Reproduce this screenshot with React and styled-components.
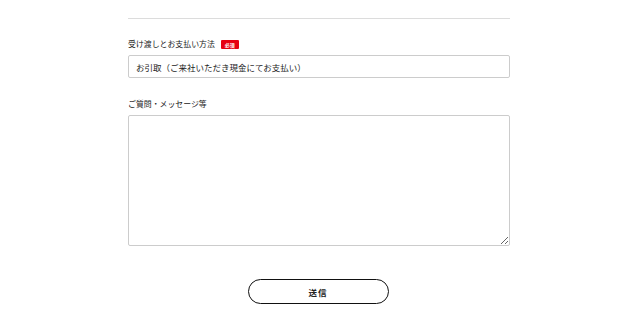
import styled, { createGlobalStyle } from "styled-components";

const GlobalStyle = createGlobalStyle`
  html, body {
    margin: 0;
    padding: 0;
    background: #ffffff;
  }
  body {
    font-family: "Noto Sans CJK JP", "Noto Sans", sans-serif;
    color: #222222;
  }
`;

const Form = styled.form`
  width: 382px;
  margin-left: 128px;
  padding-top: 18px;
`;

const Divider = styled.hr`
  margin: 0;
  border: 0;
  border-top: 1px solid #dcdcdc;
`;

const Field = styled.div`
  margin-top: ${(p) => p.$top}px;
`;

const Label = styled.div`
  display: flex;
  align-items: center;
  gap: 6px;
  height: 12px;
  font-size: 7.9px;
  line-height: 12px;
  color: #222222;
`;

const Required = styled.span`
  display: inline-flex;
  align-items: center;
  justify-content: center;
  width: 18px;
  height: 9px;
  background: #e60012;
  color: #ffffff;
  font-size: 5px;
  font-weight: 700;
  line-height: 9px;
  border-radius: 1px;
`;

const Select = styled.div`
  box-sizing: border-box;
  margin-top: ${(p) => p.$gap}px;
  height: 23px;
  padding: 0 7px;
  display: flex;
  align-items: center;
  border: 1px solid #cccccc;
  border-radius: 2px;
  font-size: 8.5px;
  color: #222222;
`;

const TextArea = styled.textarea`
  display: block;
  box-sizing: border-box;
  margin-top: ${(p) => p.$gap}px;
  width: 100%;
  height: 131px;
  border: 1px solid #cccccc;
  border-radius: 2px;
  resize: vertical;
  font-family: inherit;
  outline: none;
`;

const Actions = styled.div`
  display: flex;
  justify-content: center;
  margin-top: 33px;
  padding-right: 2px;
`;

const Submit = styled.button`
  width: 141px;
  height: 25px;
  background: #ffffff;
  border: 1.5px solid #111111;
  border-radius: 13px;
  font-family: "Noto Sans CJK JP", sans-serif;
  font-size: 8.5px;
  font-weight: 700;
  letter-spacing: 1px;
  color: #222222;
  cursor: pointer;
`;

export default function App() {
  return (
    <>
      <GlobalStyle />
      <Form onSubmit={(e) => e.preventDefault()}>
        <Divider />
        <Field $top={19}>
          <Label>
            受け渡しとお支払い方法
            <Required>必須</Required>
          </Label>
          <Select $gap={5}>お引取（ご来社いただき現金にてお支払い）</Select>
        </Field>
        <Field $top={20}>
          <Label>ご質問・メッセージ等</Label>
          <TextArea $gap={5} />
        </Field>
        <Actions>
          <Submit type="submit">送信</Submit>
        </Actions>
      </Form>
    </>
  );
}
